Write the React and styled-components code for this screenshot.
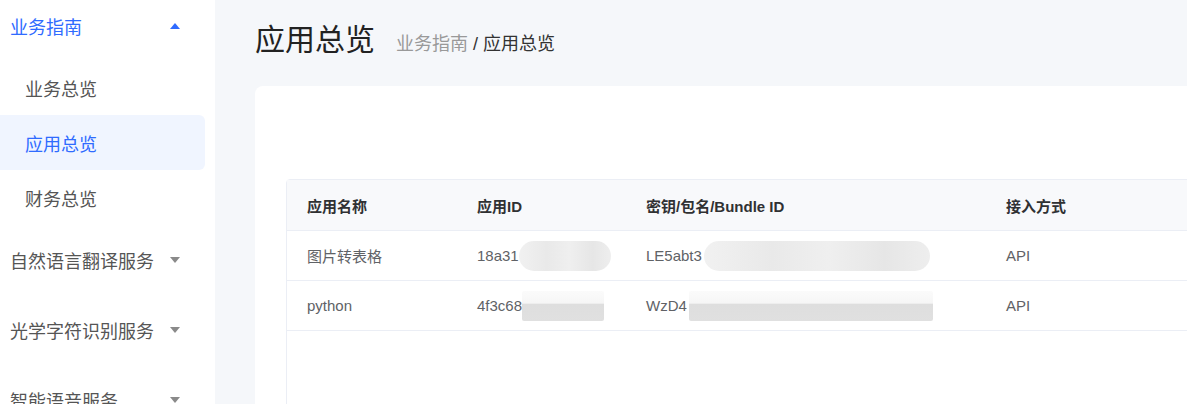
import React from 'react';
import styled, { createGlobalStyle } from 'styled-components';

const GlobalStyle = createGlobalStyle`
  html, body {
    margin: 0;
    padding: 0;
    height: 100%;
    overflow: hidden;
  }
  body {
    font-family: "Liberation Sans", "Noto Sans CJK SC", sans-serif;
    background: #f5f7fa;
  }
`;

const Layout = styled.div`
  display: flex;
  width: 100vw;
  height: 100vh;
  overflow: hidden;
`;

const Sidebar = styled.nav`
  flex: 0 0 215px;
  background: #ffffff;
  display: flex;
  flex-direction: column;
`;

const GroupHeader = styled.div`
  display: flex;
  align-items: center;
  justify-content: space-between;
  height: ${(p) => (p.$open ? '55px' : '70px')};
  margin-bottom: ${(p) => (p.$open ? '5px' : '0')};
  padding: ${(p) => (p.$open ? '0 35px 4px 10px' : '0 35px 0 10px')};
  box-sizing: border-box;
  font-size: 18px;
  color: ${(p) => (p.$open ? '#2f6bff' : '#555')};
  flex-shrink: 0;
`;

const Caret = styled.span`
  width: 0;
  height: 0;
  border-left: 5px solid transparent;
  border-right: 5px solid transparent;
  ${(p) =>
    p.$up
      ? 'border-bottom: 6px solid #2f6bff;'
      : 'border-top: 6px solid #8a8a8a;'}
`;

const SubItem = styled.div`
  display: flex;
  align-items: center;
  height: 55px;
  margin-right: 10px;
  padding-left: 25px;
  font-size: 18px;
  border-radius: 0 6px 6px 0;
  color: ${(p) => (p.$active ? '#2f6bff' : '#555')};
  background: ${(p) => (p.$active ? '#f0f5ff' : 'transparent')};
  flex-shrink: 0;
`;

const Main = styled.main`
  flex: 1;
  min-width: 0;
  padding: 0 0 0 40px;
  display: flex;
  flex-direction: column;
  overflow: hidden;
`;

const PageHead = styled.div`
  display: flex;
  align-items: baseline;
  gap: 21px;
  height: 86px;
  flex-shrink: 0;
  padding-top: 22px;
  box-sizing: border-box;
`;

const PageTitle = styled.h1`
  margin: 0;
  font-size: 30px;
  font-weight: normal;
  color: #222;
  line-height: 36px;
`;

const Crumbs = styled.div`
  font-size: 18px;
  color: #333;
  span {
    color: #999;
  }
`;

const Card = styled.section`
  flex: 1;
  width: 1100px;
  background: #ffffff;
  border-radius: 8px 0 0 0;
  padding: 93px 0 0 31px;
  box-sizing: border-box;
`;

const Table = styled.div`
  width: 1100px;
  min-height: 400px;
  border: 1px solid #ebeef5;
  border-radius: 4px;
  box-sizing: border-box;
`;

const Row = styled.div`
  display: grid;
  grid-template-columns: 170px 169px 360px 1fr;
  align-items: center;
  height: ${(p) => (p.$head ? '50px' : '49px')};
  border-bottom: 1px solid #ebeef5;
  background: ${(p) => (p.$head ? '#f8f9fb' : '#ffffff')};
  font-size: 15px;
  font-weight: ${(p) => (p.$head ? 'bold' : 'normal')};
  color: ${(p) => (p.$head ? '#303133' : '#606266')};
`;

const Cell = styled.div`
  padding-left: 20px;
  display: flex;
  align-items: center;
  white-space: nowrap;
`;

const Redacted = styled.span`
  display: inline-block;
  width: ${(p) => p.$w}px;
  height: 30px;
  margin-left: ${(p) => p.$ml || 0}px;
  border-radius: ${(p) => (p.$pill ? '15px' : '2px')};
  background: ${(p) =>
    p.$dark
      ? 'linear-gradient(180deg, #fbfbfb 0%, #f6f6f6 40%, #dedede 45%, #e0e0e0 100%)'
      : 'linear-gradient(90deg, #f1f1f1, #e9e9e9 30%, #efefef 55%, #e6e6e6 80%, #eeeeee)'};
  filter: blur(0.6px);
`;

const rows = [
  {
    name: '图片转表格',
    id: '18a31',
    idMask: { w: 92, ml: 0, pill: true },
    key: 'LE5abt3',
    keyMask: { w: 226, ml: 2, pill: true },
    mode: 'API',
  },
  {
    name: 'python',
    id: '4f3c68',
    idMask: { w: 82, ml: 0, dark: true },
    key: 'WzD4',
    keyMask: { w: 244, ml: 2, dark: true },
    mode: 'API',
  },
];

export default function App() {
  return (
    <>
      <GlobalStyle />
      <Layout>
        <Sidebar>
          <GroupHeader $open>
            业务指南
            <Caret $up />
          </GroupHeader>
          <SubItem>业务总览</SubItem>
          <SubItem $active>应用总览</SubItem>
          <SubItem>财务总览</SubItem>
          <GroupHeader>
            自然语言翻译服务
            <Caret />
          </GroupHeader>
          <GroupHeader>
            光学字符识别服务
            <Caret />
          </GroupHeader>
          <GroupHeader>
            智能语音服务
            <Caret />
          </GroupHeader>
        </Sidebar>
        <Main>
          <PageHead>
            <PageTitle>应用总览</PageTitle>
            <Crumbs>
              <span>业务指南</span> / 应用总览
            </Crumbs>
          </PageHead>
          <Card>
            <Table>
              <Row $head>
                <Cell>应用名称</Cell>
                <Cell>应用ID</Cell>
                <Cell>密钥/包名/Bundle ID</Cell>
                <Cell>接入方式</Cell>
              </Row>
              {rows.map((r) => (
                <Row key={r.name}>
                  <Cell>{r.name}</Cell>
                  <Cell>
                    {r.id}
                    <Redacted $w={r.idMask.w} $ml={r.idMask.ml} $pill={r.idMask.pill} $dark={r.idMask.dark} />
                  </Cell>
                  <Cell>
                    {r.key}
                    <Redacted $w={r.keyMask.w} $ml={r.keyMask.ml} $pill={r.keyMask.pill} $dark={r.keyMask.dark} />
                  </Cell>
                  <Cell>{r.mode}</Cell>
                </Row>
              ))}
            </Table>
          </Card>
        </Main>
      </Layout>
    </>
  );
}
